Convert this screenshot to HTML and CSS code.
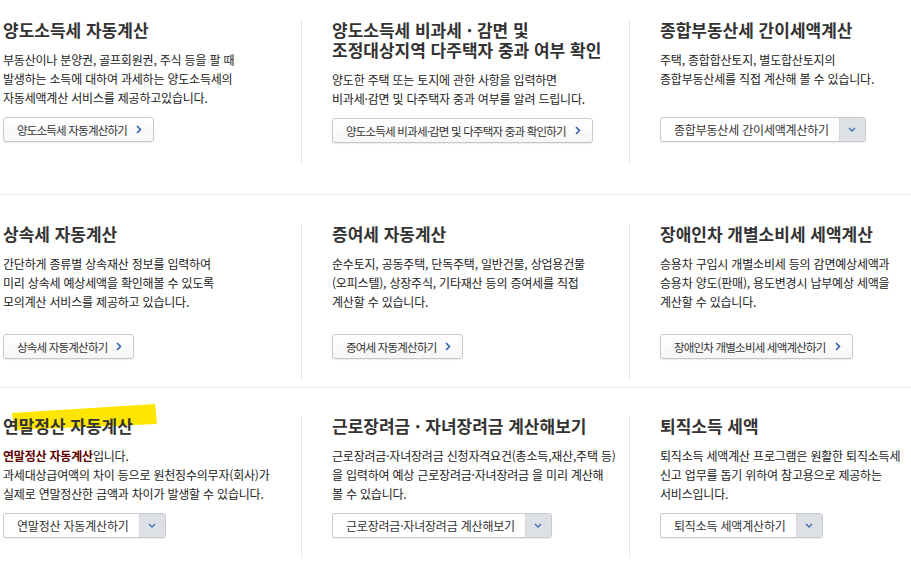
FILE: index.html
```html
<!DOCTYPE html>
<html lang="ko">
<head>
  <meta charset="UTF-8" />
  <title>세금 모의계산</title>
  <link rel="stylesheet" href="styles.css">
</head>
<body>

  <div class="board">

    <section class="row row-first">
      <div class="item">
        <div class="item-body">
          <h2 class="item-title">양도소득세 자동계산</h2>
          <p class="item-desc">부동산이나 분양권, 골프회원권, 주식 등을 팔 때<br>발생하는 소득에 대하여 과세하는 양도소득세의<br>자동세액계산 서비스를 제공하고있습니다.</p>
        </div>
        <a class="btn" href="#">양도소득세 자동계산하기 <svg class="btn-arrow" width="6" height="9" viewBox="0 0 6 9"><polyline points="1,1 4.5,4.5 1,8" /></svg></a>
      </div>
      <div class="item">
        <div class="item-body">
          <h2 class="item-title">양도소득세 비과세 · 감면 및<br>조정대상지역 다주택자 중과 여부 확인</h2>
          <p class="item-desc">양도한 주택 또는 토지에 관한 사항을 입력하면<br>비과세·감면 및 다주택자 중과 여부를 알려 드립니다.</p>
        </div>
        <a class="btn" href="#">양도소득세 비과세·감면 및 다주택자 중과 확인하기 <svg class="btn-arrow" width="6" height="9" viewBox="0 0 6 9"><polyline points="1,1 4.5,4.5 1,8" /></svg></a>
      </div>
      <div class="item">
        <div class="item-body">
          <h2 class="item-title">종합부동산세 간이세액계산</h2>
          <p class="item-desc">주택, 종합합산토지, 별도합산토지의<br>종합부동산세를 직접 계산해 볼 수 있습니다.</p>
        </div>
        <div class="select">
          <span class="select-label">종합부동산세 간이세액계산하기</span>
          <span class="select-arrow"><svg width="8" height="5" viewBox="0 0 8 5"><polyline points="1,1 4,4 7,1" /></svg></span>
        </div>
      </div>
    </section>

    <section class="row row-mid">
      <div class="item">
        <div class="item-body">
          <h2 class="item-title">상속세 자동계산</h2>
          <p class="item-desc">간단하게 종류별 상속재산 정보를 입력하여<br>미리 상속세 예상세액을 확인해볼 수 있도록<br>모의계산 서비스를 제공하고 있습니다.</p>
        </div>
        <a class="btn" href="#">상속세 자동계산하기 <svg class="btn-arrow" width="6" height="9" viewBox="0 0 6 9"><polyline points="1,1 4.5,4.5 1,8" /></svg></a>
      </div>
      <div class="item">
        <div class="item-body">
          <h2 class="item-title">증여세 자동계산</h2>
          <p class="item-desc">순수토지, 공동주택, 단독주택, 일반건물, 상업용건물<br>(오피스텔), 상장주식, 기타재산 등의 증여세를 직접<br>계산할 수 있습니다.</p>
        </div>
        <a class="btn" href="#">증여세 자동계산하기 <svg class="btn-arrow" width="6" height="9" viewBox="0 0 6 9"><polyline points="1,1 4.5,4.5 1,8" /></svg></a>
      </div>
      <div class="item">
        <div class="item-body">
          <h2 class="item-title">장애인차 개별소비세 세액계산</h2>
          <p class="item-desc">승용차 구입시 개별소비세 등의 감면예상세액과<br>승용차 양도(판매), 용도변경시 납부예상 세액을<br>계산할 수 있습니다.</p>
        </div>
        <a class="btn" href="#">장애인차 개별소비세 세액계산하기 <svg class="btn-arrow" width="6" height="9" viewBox="0 0 6 9"><polyline points="1,1 4.5,4.5 1,8" /></svg></a>
      </div>
    </section>

    <section class="row row-last">
      <div class="item">
        <div class="item-body">
          <h2 class="item-title marked">
            <svg class="marker" width="146" height="28" viewBox="0 0 146 28"><path d="M0 9 L30 7 L80 4 L143 0 L145 20 L100 22 L50 24 L2 26 Z" /></svg>
            <span>연말정산 자동계산</span>
          </h2>
          <p class="item-desc"><strong class="hl">연말정산 자동계산</strong>입니다.<br>과세대상급여액의 차이 등으로 원천징수의무자(회사)가<br>실제로 연말정산한 금액과 차이가 발생할 수 있습니다.</p>
        </div>
        <div class="select">
          <span class="select-label">연말정산 자동계산하기</span>
          <span class="select-arrow"><svg width="8" height="5" viewBox="0 0 8 5"><polyline points="1,1 4,4 7,1" /></svg></span>
        </div>
      </div>
      <div class="item">
        <div class="item-body">
          <h2 class="item-title">근로장려금 · 자녀장려금 계산해보기</h2>
          <p class="item-desc">근로장려금·자녀장려금 신청자격요건(총소득,재산,주택 등)<br>을 입력하여 예상 근로장려금·자녀장려금 을 미리 계산해<br>볼 수 있습니다.</p>
        </div>
        <div class="select">
          <span class="select-label">근로장려금·자녀장려금 계산해보기</span>
          <span class="select-arrow"><svg width="8" height="5" viewBox="0 0 8 5"><polyline points="1,1 4,4 7,1" /></svg></span>
        </div>
      </div>
      <div class="item">
        <div class="item-body">
          <h2 class="item-title">퇴직소득 세액</h2>
          <p class="item-desc">퇴직소득 세액계산 프로그램은 원활한 퇴직소득세<br>신고 업무를 돕기 위하여 참고용으로 제공하는<br>서비스입니다.</p>
        </div>
        <div class="select">
          <span class="select-label">퇴직소득 세액계산하기</span>
          <span class="select-arrow"><svg width="8" height="5" viewBox="0 0 8 5"><polyline points="1,1 4,4 7,1" /></svg></span>
        </div>
      </div>
    </section>

  </div>

</body>
</html>
```

FILE: styles.css
```css
body {
  margin: 0;
  padding: 0;
  background: #fff;
  font-family: "Noto Sans CJK KR", "Noto Sans", sans-serif;
  color: #222;
  overflow: hidden;
}

.board {
  width: 911px;
}

.row {
  display: grid;
  grid-template-columns: 298px 328px 1fr;
  padding-left: 3px;
  border-bottom: 1px solid #ebebeb;
}

.row-first {
  padding-top: 20px;
  padding-bottom: 31px;
}

.row-mid {
  padding-top: 29px;
  padding-bottom: 8px;
}

.row-last {
  padding-top: 28px;
  border-bottom: none;
}

.item {
  padding-bottom: 20px;
  white-space: nowrap;
}

.item + .item {
  border-left: 1px solid #e6e6e6;
  padding-left: 30px;
}

.item-body {
  min-height: 87px;
}

.item-title {
  margin: 0;
  font-size: 17px;
  line-height: 20px;
  font-weight: 700;
  color: #333;
}

.item-desc {
  margin: 10px 0 0;
  font-size: 12px;
  line-height: 19px;
  color: #222;
  letter-spacing: -0.2px;
}

.row-mid .btn {
  margin-top: 23px;
}

.hl {
  color: #5c0000;
}

.marked {
  position: relative;
}

.marked span {
  position: relative;
}

.marker {
  position: absolute;
  left: 9px;
  top: -12px;
}

.marker path {
  fill: #ffe600;
}

.btn {
  display: flex;
  align-items: center;
  gap: 9px;
  width: max-content;
  height: 23px;
  margin-top: 10px;
  padding: 0 11px 0 13px;
  border: 1px solid #c9c9c9;
  border-radius: 3px;
  background: linear-gradient(#fff, #f6f6f6);
  box-shadow: 0 1px 1px rgba(0, 0, 0, 0.08);
  font-size: 11.5px;
  letter-spacing: -0.8px;
  color: #333;
  text-decoration: none;
}

.btn-arrow polyline {
  fill: none;
  stroke: #2f63b0;
  stroke-width: 1.6;
}

.select {
  display: flex;
  width: max-content;
  height: 23px;
  margin-top: 10px;
  border: 1px solid #c9c9c9;
  border-radius: 3px;
  overflow: hidden;
  background: #fff;
  box-shadow: 0 1px 1px rgba(0, 0, 0, 0.08);
}

.select-label {
  display: flex;
  align-items: center;
  padding: 0 10px 0 13px;
  font-size: 12px;
  letter-spacing: -0.2px;
  color: #333;
}

.select-arrow {
  display: flex;
  align-items: center;
  justify-content: center;
  width: 25px;
  border-left: 1px solid #d3d7dc;
  background: #dde1e6;
}

.select-arrow polyline {
  fill: none;
  stroke: #3a6bb3;
  stroke-width: 1.3;
}
```
